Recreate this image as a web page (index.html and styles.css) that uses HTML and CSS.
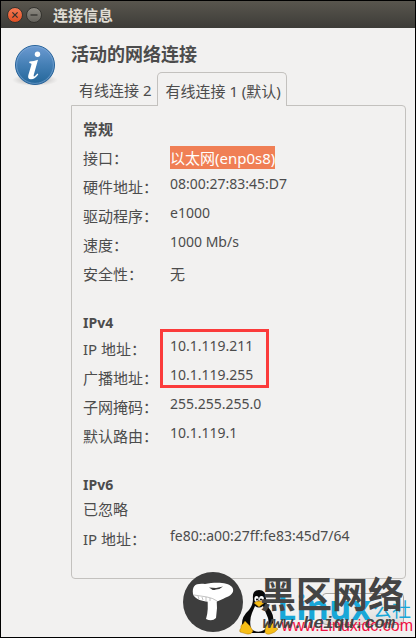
FILE: index.html
```html
<!DOCTYPE html>
<html lang="zh-CN">
<head>
<meta charset="utf-8">
<title>连接信息</title>
<link rel="stylesheet" href="styles.css">
</head>
<body>
<div class="window">
  <header class="titlebar">
    <button class="control close" aria-label="关闭窗口"><svg viewBox="0 0 16 16"><path d="M5 5l6 6m0-6l-6 6"/></svg></button>
    <button class="control minimize" aria-label="最小化"><svg viewBox="0 0 16 16"><path d="M4 8h8"/></svg></button>
    <h1>连接信息</h1>
  </header>
  <main class="content">
    <svg class="info" viewBox="0 0 46 46" aria-hidden="true">
      <defs>
        <linearGradient id="blue" x1="0" y1="0" x2="0" y2="1"><stop offset="0" stop-color="#6d9bd2"/><stop offset=".5" stop-color="#447fb5"/><stop offset="1" stop-color="#236699"/></linearGradient>
        <radialGradient id="shade"><stop offset="0" stop-color="#777" stop-opacity=".7"/><stop offset="1" stop-color="#999" stop-opacity="0"/></radialGradient>
      </defs>
      <ellipse cx="23" cy="38" rx="23" ry="6" fill="url(#shade)"/>
      <circle cx="23" cy="23" r="19.5" fill="url(#blue)" stroke="#27639b"/>
      <circle cx="23" cy="23" r="18.4" fill="none" stroke="#86add8" stroke-opacity=".6"/>
      <circle cx="25.5" cy="12.3" r="2.7" fill="#fff"/>
      <path fill="#fff" d="M17.5 19.5q4.500-.3 8.500-1.800l-4.200 15q-.6 2.300.8 1.500 1.500-.9 2.700-2.700l1 .7q-3 5.100-7.400 5.100-3.500-.2-2.600-4l3.100-10.600q.5-1.700-2.200-1.700z"/>
    </svg>
    <section class="details">
      <h2>活动的网络连接</h2>
      <div class="tabs" role="tablist">
        <button class="tab" role="tab" aria-selected="false">有线连接 2</button>
        <button class="tab active" role="tab" aria-selected="true">有线连接 1 (默认)</button>
      </div>
      <div class="panel" role="tabpanel">
        <h3>常规</h3>
        <dl>
          <dt>接口：</dt><dd class="cjk"><mark>以太网(enp0s8)</mark></dd>
          <dt>硬件地址：</dt><dd>08:00:27:83:45:D7</dd>
          <dt>驱动程序：</dt><dd>e1000</dd>
          <dt>速度：</dt><dd>1000 Mb/s</dd>
          <dt>安全性：</dt><dd class="cjk">无</dd>
        </dl>
        <h3>IPv4</h3>
        <dl class="ipv4">
          <dt>IP 地址：</dt><dd>10.1.119.211</dd>
          <dt>广播地址：</dt><dd>10.1.119.255</dd>
          <dt>子网掩码：</dt><dd>255.255.255.0</dd>
          <dt>默认路由：</dt><dd>10.1.119.1</dd>
        </dl>
        <h3>IPv6</h3>
        <p>已忽略</p>
        <dl>
          <dt>IP 地址：</dt><dd>fe80::a00:27ff:fe83:45d7/64</dd>
        </dl>
      </div>
    </section>
  </main>
  <footer class="actions"><button class="dismiss" aria-label="关闭"></button></footer>
  <div class="watermark">
    <svg class="mushroom" viewBox="0 0 60 60" aria-hidden="true">
      <circle cx="30" cy="30" r="30" fill="#3d3d3d"/>
      <path fill="#fff" d="M24 24h11q-2 6-1 12l-1 10q-4 4-10 1 3-9 1-23z"/>
      <path fill="#fff" d="M10 22C9 14 12 11 22 12C32 10 45 10 49 15C52 19 49 23 44 25C39 27 35 30 30 30C20 30 11 27 10 22z"/>
      <path fill="none" stroke="#999" stroke-width=".6" d="M11 23q7 1 13 2 6 1 10 4M15 24l1 3m3-2l1 3m3-3v4m4-3v3"/>
      <path fill="#3d3d3d" d="M26 15.500l7 .5 7-1.500q-3 3-7 3-3 1-4 0z"/>
    </svg>
    <svg class="tux" viewBox="0 0 39 46" aria-hidden="true">
      <path fill="#080808" d="M14 10q-1-9 6-9t7 9q0 6 5 12 5 9 0 17l-7 5H12l-9-7q-1-9 7-16 4-5 4-11z"/>
      <path fill="#f5f5f5" d="M16 17q4 3 8 0l5 12q2 8-4 12-6 4-13-1-2-9 1-16z"/>
      <ellipse cx="17.500" cy="10" rx="2.200" ry="3" fill="#fff"/><ellipse cx="22.500" cy="10" rx="2.400" ry="3" fill="#fff"/>
      <circle cx="18" cy="10.500" r="1"/><circle cx="22" cy="10.500" r="1"/>
      <path fill="#f6bd16" stroke="#996400" stroke-width=".4" d="M15 14q5-4 10 0l-5 4zM6 32l5 5 3 5q-2 4-6 3l-7-2q-1-2 1-4-1-3 2-4zM27 34q4 4 7 0l1 3 4 3q-3 4-8 5-5 1-5-3z"/>
    </svg>
    <span class="brand">Linux</span>
    <span class="brand-cn">公社</span>
    <span class="site">www.Linuxidc.com</span>
    <span class="stamp">黑区网络</span>
    <span class="stamp-url">www.heiqu.com</span>
  </div>
</div>
</body>
</html>
```
FILE: styles.css
```css
* { box-sizing: border-box; }
body {
  margin: 0;
  color: #4c4c4c;
  background: #f2f1f0;
  font: 14px/20px "Noto Sans", "Noto Sans CJK SC", sans-serif;
}
h1, h2, h3, p, dl, dd { margin: 0; }
button { padding: 0; font: inherit; color: inherit; }
.window {
  position: relative;
  min-height: 100vh;
  border: 1px solid #000;
  overflow: hidden;
}
.titlebar {
  display: flex;
  align-items: center;
  gap: 3px;
  height: 27px;
  padding: 0 6px;
  color: #dfdbd2;
  background: linear-gradient(#59564e, #3d3c38);
}
.titlebar h1 { margin-left: 8px; font-size: 15px; line-height: 20px; }
.control {
  width: 16px;
  height: 16px;
  border: 1px solid #34332f;
  border-radius: 50%;
  background: linear-gradient(#8e8b83, #65635d);
}
.close { background: linear-gradient(#f67b54, #df4f23); }
.control svg { display: block; width: 100%; fill: none; stroke: #33322e; stroke-width: 1.5; }
.content { display: flex; gap: 13px; padding: 14px 9px 0 11px; }
.info { flex: none; width: 46px; height: 46px; }
.details { flex: 1; min-width: 0; }
h2 { font-size: 18px; line-height: 24px; }
.tabs { display: flex; align-items: flex-end; margin-top: 6px; }
.tab {
  height: 32px;
  padding: 2px 5px 0 7px;
  border: 1px solid transparent;
  background: none;
  font-size: 15px;
}
.tab.active {
  position: relative;
  z-index: 1;
  height: 34px;
  margin-bottom: -1px;
  border-color: #c3c1be;
  border-bottom: 0;
  border-radius: 5px 5px 0 0;
  background: #f2f1f0;
}
.panel {
  padding: 13px 11px 0;
  border: 1px solid #c3c1be;
  border-radius: 0 4px 4px 4px;
}
h3 { font-size: 14px; line-height: 20px; }
h3:first-child { font-size: 15px; }
dl {
  position: relative;
  display: grid;
  grid-template-columns: 87px 1fr;
  grid-auto-rows: 29px;
  margin-bottom: 24px;
}
dt, p, .cjk { font-size: 15px; }
dt, p { padding-top: 4px; line-height: 20px; white-space: nowrap; }
p { height: 30px; }
h3:first-child + dl { padding-top: 5px; }
dd { padding-top: 1px; white-space: nowrap; }
dd.cjk { padding-top: 4px; }
mark {
  display: block;
  width: max-content;
  height: 23px;
  margin-top: -2px;
  line-height: 24px;
  color: #fff;
  background: #f07f55;
}
.ipv4 { padding-top: 2px; }
.ipv4::after {
  content: "";
  position: absolute;
  top: -4px;
  left: 77px;
  width: 103px;
  height: 53px;
  border: 3px solid #fb3b3b;
}
.actions { display: flex; justify-content: flex-end; padding: 14px 11px 10px; }
.dismiss {
  width: 82px;
  height: 32px;
  border: 1px solid #aaa7a3;
  border-radius: 4px;
  background: linear-gradient(#fafafa, #dedddb);
}
.watermark {
  position: absolute;
  right: 0;
  bottom: 0;
  width: 232px;
  height: 66px;
  white-space: nowrap;
}
.watermark > * { position: absolute; }
.mushroom { left: 0; top: 1px; width: 60px; height: 60px; }
.tux { left: 56px; top: 18px; width: 39px; height: 46px; }
.brand { left: 94px; top: 18px; color: #18a7d8; font: bold 34px/36px "Open Sans", sans-serif; }
.brand-cn { left: 190px; top: 27px; color: #18a7d8; font-size: 19px; line-height: 24px; }
.site { right: 2px; bottom: 3px; color: #f01042; font: 16px/16px "Liberation Sans", sans-serif; }
.stamp { right: 11px; top: 3px; color: #444; font: 700 36px/36px "Noto Sans CJK SC", sans-serif; }
.stamp-url { right: 20px; top: 45px; color: #444; font: italic bold 17px/16px "Liberation Mono", monospace; }
```
